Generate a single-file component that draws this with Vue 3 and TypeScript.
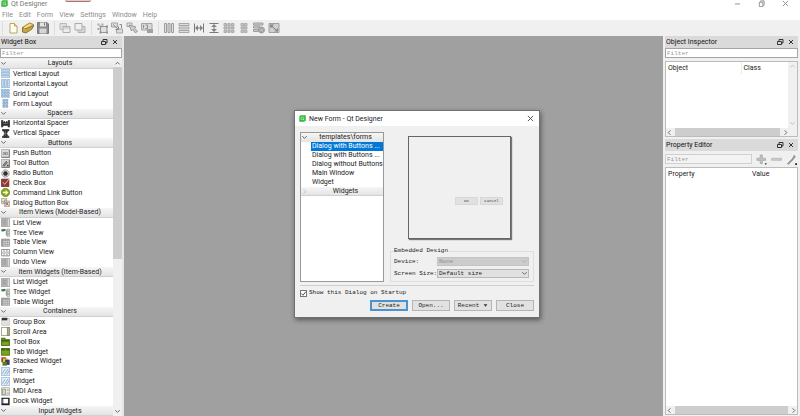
<script setup lang="ts">
import { ref } from 'vue'

type Shape = [d: string, fill: string, stroke?: string]
interface Row { label: string; icon?: string }

const menus = ['File', 'Edit', 'Form', 'View', 'Settings', 'Window', 'Help']

const toolGroups: string[][] = [
  ['new', 'open', 'save'],
  ['back', 'front'],
  ['editWidgets', 'editSignals', 'editBuddies', 'editTabs'],
  ['layH', 'layV', 'splitH', 'splitV', 'layGrid', 'layForm', 'breakLay', 'adjust'],
]

const rows: Row[] = [
  { label: 'Layouts' },
  { label: 'Vertical Layout', icon: 'vbox' },
  { label: 'Horizontal Layout', icon: 'hbox' },
  { label: 'Grid Layout', icon: 'grid' },
  { label: 'Form Layout', icon: 'form' },
  { label: 'Spacers' },
  { label: 'Horizontal Spacer', icon: 'hspace' },
  { label: 'Vertical Spacer', icon: 'vspace' },
  { label: 'Buttons' },
  { label: 'Push Button', icon: 'push' },
  { label: 'Tool Button', icon: 'tool' },
  { label: 'Radio Button', icon: 'radio' },
  { label: 'Check Box', icon: 'check' },
  { label: 'Command Link Button', icon: 'command' },
  { label: 'Dialog Button Box', icon: 'buttonBox' },
  { label: 'Item Views (Model-Based)' },
  { label: 'List View', icon: 'list' },
  { label: 'Tree View', icon: 'tree' },
  { label: 'Table View', icon: 'table' },
  { label: 'Column View', icon: 'column' },
  { label: 'Undo View', icon: 'list' },
  { label: 'Item Widgets (Item-Based)' },
  { label: 'List Widget', icon: 'list' },
  { label: 'Tree Widget', icon: 'tree' },
  { label: 'Table Widget', icon: 'table' },
  { label: 'Containers' },
  { label: 'Group Box', icon: 'group' },
  { label: 'Scroll Area', icon: 'scroll' },
  { label: 'Tool Box', icon: 'toolbox' },
  { label: 'Tab Widget', icon: 'tab' },
  { label: 'Stacked Widget', icon: 'stacked' },
  { label: 'Frame', icon: 'frame' },
  { label: 'Widget', icon: 'frame' },
  { label: 'MDI Area', icon: 'mdi' },
  { label: 'Dock Widget', icon: 'dock' },
  { label: 'Input Widgets' },
]

// Every icon is drawn on a 24 x 24 grid.
const icons: Record<string, Shape[]> = {
  logo: [['M5 1H23V18L18 23H1V6Z', '#2fb53c'], ['M7 7H16V16H7Z', 'none', '#c9f5cc'], ['M13 13L18 18', 'none', '#c9f5cc']],
  new: [['M6 3H15L20 8V22H6Z', '#fffdf0', '#b9a66a'], ['M15 3V8H20', '#f3dc8c', '#c2a448']],
  open: [['M1 11L15 2L23 5V9L9 18Z', '#e4c867', '#a08738'], ['M1 11L9 13L23 7L20 14L8 22L1 20Z', '#c8a640', '#907432'], ['M4 12L17 5', 'none', '#fff1b0']],
  save: [['M1 1H20L23 4V23H1Z', '#8a8a8a', '#777'], ['M6 1H18V9H6Z', '#e4e4e4'], ['M14 2H16V7H14Z', '#777'], ['M5 13H19V23H5Z', '#d5d5d5']],
  back: [['M2 3H15V15H2Z', '#dedede', '#b2b2b2'], ['M8 9H22V21H8Z', '#ececec', '#a4a4a4'], ['M8 12H22', 'none', '#b4b4b4']],
  front: [['M8 9H22V21H8Z', '#d2d2d2', '#a8a8a8'], ['M2 3H16V16H2Z', '#f0f0f0', '#a0a0a0']],
  editWidgets: [['M3 3H7V7H3Z M11 3H15V7H11Z M3 12H7V16H3Z', '#999'], ['M9 9H22V21H9Z', '#dedede', '#888'], ['M7 7H11V11H7Z M20 7H24V11H20Z M7 19H11V23H7Z M20 19H24V23H20Z', '#808080']],
  editSignals: [['M1 2H13V10H1Z M11 14H23V22H11Z', '#dcdcdc', '#969696'], ['M4 5L15 15M15 9V15H9M17 5H21V12', 'none', '#777']],
  editBuddies: [['M2 2H12V9H2Z', '#e0e0e0', '#999'], ['M6 6L11 18L14 15L19 22L23 18L17 13L20 10Z', '#c8c8c8', '#8a8a8a']],
  editTabs: [['M1 3H22V16H1Z', '#d4d4d4', '#999'], ['M5 6V13M9 6H13V13H9', 'none', '#808080'], ['M12 14H24V22H12Z', '#949494']],
  layH: [['M3 3H7V21H3Z M10 3H14V21H10Z M17 3H21V21H17Z', '#dcdcdc', '#919191']],
  layV: [['M2 3H22V7H2Z M2 10H22V14H2Z M2 17H22V21H2Z', '#dcdcdc', '#9c9c9c']],
  splitH: [['M3 3V21M21 3V21M6 12H18', 'none', '#666'], ['M4 12L10 6V18Z M20 12L14 6V18Z', '#707070']],
  splitV: [['M3 3H21M3 21H21M12 6V18', 'none', '#666'], ['M12 4L6 10H18Z M12 20L6 14H18Z', '#707070']],
  layGrid: [['M2 3H22V21H2Z', '#d0d0d0'], ['M2 3H7V8H2Z M10 3H14V8H10Z M17 3H22V8H17Z M2 10H7V14H2Z M10 10H14V14H10Z M17 10H22V14H17Z M2 17H7V21H2Z M10 17H14V21H10Z M17 17H22V21H17Z', '#b8b8b8', '#a2a2a2']],
  layForm: [['M6 3H18V21H6Z', '#d0d0d0'], ['M6 3H11V8H6Z M13 3H18V8H13Z M6 10H11V14H6Z M13 10H18V14H13Z M6 17H11V21H6Z M13 17H18V21H13Z', '#c0c0c0', '#a4a4a4']],
  breakLay: [['M1 2H20V6H1Z M1 8H13V12H1Z M1 15H11V19H1Z', '#c4c4c4', '#929292'], ['M17 9A7 7 0 1 1 16.9 9Z', '#929292'], ['M14 13L20 19M20 13L14 19', 'none', '#ccc']],
  adjust: [['M2 3H22V21H2Z', '#cbcbcb', '#929292'], ['M6 7L18 18', 'none', '#606060'], ['M4 5H12L5 13Z M20 19H13L20 12Z', '#707070']],
  vbox: [['M1 1H23V6H1Z M1 9H23V14H1Z M1 17H23V22H1Z', '#cfe3f5', '#7fa8cc']],
  hbox: [['M1 1H6V23H1Z M9 1H14V23H9Z M17 1H22V23H17Z', '#cfe3f5', '#7fa8cc']],
  grid: [['M1 1H22V22H1Z', '#cfe3f5'], ['M1 1H6V6H1Z M9 1H14V6H9Z M17 1H22V6H17Z M1 9H6V14H1Z M9 9H14V14H9Z M17 9H22V14H17Z M1 17H6V22H1Z M9 17H14V22H9Z M17 17H22V22H17Z', '#bdd8ef', '#7fa8cc']],
  form: [['M5 1H18V22H5Z', '#cfdfef'], ['M5 1H10V6H5Z M13 1H18V6H13Z M5 9H10V14H5Z M13 9H18V14H13Z M5 17H10V22H5Z M13 17H18V22H13Z', '#bdd3e8', '#7a9fc0']],
  hspace: [['M1 4H5V9H8V6L12 9L16 6V9H19V4H23V21H19V17H5V21H1Z', '#303030', '#303030'], ['M6 12H18', 'none', '#777']],
  vspace: [['M4 1H21V5H17V8L15 12L17 16V19H21V23H4V19H8V16L10 12L8 8V5H4Z', '#303030', '#303030'], ['M12 6V18', 'none', '#777']],
  push: [['M1 1H23V23H1Z', '#dedede', '#9b9b9b'], ['M2 22H22V3', 'none', '#5f5f5f'], ['M6 9H17V15H6Z', '#fff', '#777'], ['M9 12H14', 'none', '#444']],
  tool: [['M1 1H23V23H1Z', '#d4d4d4', '#999'], ['M2 22H22V3', 'none', '#555'], ['M5 17L14 6L17 10L9 19Z', '#8d8d8d', '#555'], ['M17 15H20V19H15Z', '#333']],
  radio: [['M12 2A10 10 0 1 1 11.9 2Z', '#d4d4d4', '#8d8d8d'], ['M12 6A6 6 0 1 1 11.9 6Z', '#303030']],
  check: [['M1 3H21V23H1Z', '#913832', '#6b2925'], ['M5 11L10 17L22 2', 'none', '#ffe4df'], ['M17 1H23V6Z', '#d4aaa6']],
  command: [['M12 1A11 11 0 1 1 11.9 1Z', '#87a51c', '#5f7812'], ['M5 10H12V5L20 12L12 19V14H5Z', '#f6ffd0']],
  buttonBox: [['M1 1H15V15H1Z M9 8H23V23H9Z', '#e2ddd4', '#9f9890'], ['M3 8L7 12L12 4', 'none', '#699b42'], ['M12 11L20 20M20 11L12 20', 'none', '#bb3029']],
  list: [['M1 1H23V23H1Z', '#a5a5a5', '#999'], ['M2 2H17V22H2Z', '#b4b4b4'], ['M4 6H14M4 11H14M4 16H14', 'none', '#949494'], ['M18 2H22V22H18Z', '#d9d9d9']],
  tree: [['M1 3H8V9H1Z', '#367942'], ['M9 5H14M14 5V19M14 12H18M14 19H18', 'none', '#777'], ['M16 3H23V8H16Z M16 10H23V15H16Z M16 17H23V22H16Z', '#e8f0e8', '#87948a'], ['M8 1L12 5L8 9Z', '#315e38']],
  table: [['M1 3H23V22H1Z', '#d8d8d8', '#8b8b8b'], ['M1 3H23V7H1Z M1 3H6V22H1Z', '#999'], ['M1 12H23M1 17H23M11 3V22M17 3V22', 'none', '#a2a2a2']],
  column: [['M1 4H23V21H1Z', '#fff', '#757575'], ['M8 4V21M16 4V21', 'none', '#777'], ['M4 9V16M12 9V16M20 9V16', 'none', '#bbb']],
  group: [['M2 4H22V22H2Z', '#f0f0f0', '#b3b3b3'], ['M2 2H17V9H2Z', '#353535'], ['M4 12H20V20H4Z', '#dedede']],
  scroll: [['M1 1H22V23H1Z', '#fffffa', '#777b67'], ['M17 1H22V23H17Z', '#b6bd91', '#74794f']],
  toolbox: [['M1 3H11V7H23V23H1Z', '#648d16', '#3f5b0a'], ['M2 10H22', 'none', '#263e07'], ['M4 14H20V21H4Z', '#7ca724']],
  tab: [['M1 4H23V22H1Z', '#76a51c', '#3f5b0a'], ['M1 4H11V9H1Z M13 4H23V9H13Z', '#3f650f']],
  stacked: [['M1 1H14V14H1Z', '#a22b21'], ['M5 4H18V18H5Z', '#e6cc25'], ['M11 7H23V21H11Z', '#303d76'], ['M4 13H16V23H4Z', '#527d22']],
  frame: [['M1 1H23V23H1Z', '#e0edf8', '#8eafcf'], ['M3 18L11 6M9 20L19 5M15 20L22 9', 'none', '#7f9cb9']],
  mdi: [['M1 2H23V22H1Z', '#f3f3ee', '#999'], ['M4 6H12V20H4Z', '#d2d9c8', '#82917b'], ['M15 5H21V11H15Z M15 14H21V20H15Z', '#bfc7ae']],
  dock: [['M1 2H23V22H1Z', '#202020'], ['M6 5H19V17H6Z', '#fff'], ['M1 5H4V17H1Z', '#89a5bd']],
  plus: [['M9 2H14V9H21V14H14V21H9V14H2V9H9Z', '#c0c0c0', '#929292'], ['M19 20H24L21 24Z', '#333']],
  minus: [['M1 9H23V14H1Z', '#c8c8c8', '#aaa']],
  wrench: [['M3 21L14 10L18 3L20 5L16 12L5 23Z', '#969696', '#777'], ['M16 3L21 8', 'none', '#888'], ['M20 20H24V24H20Z', '#222']],
}

const templates = ['Dialog with Buttons ...', 'Dialog with Buttons ...', 'Dialog without Buttons', 'Main Window', 'Widget']
const selected = ref(0)
const showOnStartup = ref(true)
</script>

<template>
  <div class="app">
    <header class="titlebar">
      <svg class="logo" viewBox="0 0 24 24"><path v-for="(s, i) in icons.logo" :key="i" :d="s[0]" :fill="s[1]" :stroke="s[2] ?? 'none'" stroke-width="2" /></svg>
      <span>Qt Designer</span>
      <i class="marker"></i>
      <div class="window-buttons">
        <button aria-label="Minimize"><svg viewBox="0 0 8 8"><path d="M1 4.500H7" /></svg></button>
        <button aria-label="Restore"><svg viewBox="0 0 8 8"><path d="M1.500 2.500H5.500V7.500H1.500ZM3 2V1H7V6H6" /></svg></button>
        <button aria-label="Close"><svg viewBox="0 0 8 8"><path d="M1 1L7 7M7 1L1 7" /></svg></button>
      </div>
    </header>

    <nav class="menubar"><button v-for="m in menus" :key="m">{{ m }}</button></nav>

    <div class="toolbar">
      <div v-for="(g, gi) in toolGroups" :key="gi" class="tool-group">
        <button v-for="t in g" :key="t" :aria-label="t">
          <svg viewBox="0 0 24 24"><path v-for="(s, i) in icons[t]" :key="i" :d="s[0]" :fill="s[1]" :stroke="s[2] ?? 'none'" stroke-width="2" /></svg>
        </button>
      </div>
    </div>

    <main class="body">
      <aside class="widget-box">
        <div class="dock-title">
          <span>Widget Box</span>
          <button aria-label="Float"><svg viewBox="0 0 8 8"><path d="M1.500 3.500H5.500V6.500H1.500ZM3 3V1.500H7V5H6" /></svg></button>
          <button aria-label="Close"><svg viewBox="0 0 8 8"><path d="M2 2L6 6M6 2L2 6" /></svg></button>
        </div>
        <input class="filter" type="text" placeholder="Filter" aria-label="Filter widgets">
        <div class="widget-tree">
          <div class="tree-rows">
            <div v-for="(r, ri) in rows" :key="ri" class="row" :class="{ category: !r.icon }">
              <svg v-if="!r.icon" class="chevron" viewBox="0 0 8 8"><path d="M1.500 2.500L4 5L6.500 2.500" /></svg>
              <svg v-else class="row-icon" viewBox="0 0 24 24"><path v-for="(s, i) in icons[r.icon]" :key="i" :d="s[0]" :fill="s[1]" :stroke="s[2] ?? 'none'" stroke-width="2" /></svg>
              <span>{{ r.label }}</span>
            </div>
          </div>
          <div class="vscroll">
            <svg class="chevron" viewBox="0 0 8 8"><path d="M1.500 5L4 2.500L6.500 5" /></svg>
            <i class="vthumb"></i>
            <svg class="chevron" viewBox="0 0 8 8"><path d="M1.500 2.500L4 5L6.500 2.500" /></svg>
          </div>
        </div>
      </aside>

      <section class="workspace"></section>

      <aside class="right-docks">
        <section class="inspector">
          <div class="dock-title">
            <span>Object Inspector</span>
            <button aria-label="Float"><svg viewBox="0 0 8 8"><path d="M1.500 3.500H5.500V6.500H1.500ZM3 3V1.500H7V5H6" /></svg></button>
            <button aria-label="Close"><svg viewBox="0 0 8 8"><path d="M2 2L6 6M6 2L2 6" /></svg></button>
          </div>
          <input class="filter" type="text" placeholder="Filter" aria-label="Filter objects">
          <div class="data-view">
            <div class="data-area">
              <table><thead><tr><th>Object</th><th class="class-col">Class</th></tr></thead></table>
              <div class="vscroll plain">
                <svg class="chevron faint" viewBox="0 0 8 8"><path d="M1.500 5L4 2.500L6.500 5" /></svg>
                <svg class="chevron faint" viewBox="0 0 8 8"><path d="M1.500 2.500L4 5L6.500 2.500" /></svg>
              </div>
            </div>
            <div class="hscroll short">
              <svg class="chevron" viewBox="0 0 8 8"><path d="M5 1.500L2.500 4L5 6.500" /></svg>
              <i></i>
              <svg class="chevron" viewBox="0 0 8 8"><path d="M3 1.500L5.500 4L3 6.500" /></svg>
            </div>
          </div>
        </section>

        <section class="properties">
          <div class="dock-title">
            <span>Property Editor</span>
            <button aria-label="Float"><svg viewBox="0 0 8 8"><path d="M1.500 3.500H5.500V6.500H1.500ZM3 3V1.500H7V5H6" /></svg></button>
            <button aria-label="Close"><svg viewBox="0 0 8 8"><path d="M2 2L6 6M6 2L2 6" /></svg></button>
          </div>
          <div class="property-tools">
            <input class="filter" type="text" placeholder="Filter" aria-label="Filter properties">
            <button v-for="t in ['plus', 'minus', 'wrench']" :key="t" :aria-label="t">
              <svg viewBox="0 0 24 24"><path v-for="(s, i) in icons[t]" :key="i" :d="s[0]" :fill="s[1]" :stroke="s[2] ?? 'none'" stroke-width="1" /></svg>
            </button>
          </div>
          <div class="data-view">
            <div class="data-area">
              <table><thead><tr><th>Property</th><th class="value-col">Value</th></tr></thead></table>
            </div>
            <div class="hscroll">
              <svg class="chevron" viewBox="0 0 8 8"><path d="M5 1.500L2.500 4L5 6.500" /></svg>
              <i></i>
              <svg class="chevron" viewBox="0 0 8 8"><path d="M3 1.500L5.500 4L3 6.500" /></svg>
            </div>
          </div>
        </section>
      </aside>
    </main>

    <section class="dialog" role="dialog" aria-labelledby="dialog-title">
      <div class="dialog-title">
        <svg class="logo" viewBox="0 0 24 24"><path v-for="(s, i) in icons.logo" :key="i" :d="s[0]" :fill="s[1]" :stroke="s[2] ?? 'none'" stroke-width="2" /></svg>
        <span id="dialog-title">New Form - Qt Designer</span>
        <button aria-label="Close dialog"><svg viewBox="0 0 8 8"><path d="M1 1L7 7M7 1L1 7" /></svg></button>
      </div>
      <div class="dialog-body">
        <div class="dialog-top">
          <div class="template-list">
            <div class="row category">
              <svg class="chevron" viewBox="0 0 8 8"><path d="M1.500 2.500L4 5L6.500 2.500" /></svg>
              <span>templates\forms</span>
            </div>
            <button v-for="(t, i) in templates" :key="i" class="template" :class="{ selected: selected === i }" @click="selected = i">{{ t }}</button>
            <div class="row category">
              <svg class="chevron faint" viewBox="0 0 8 8"><path d="M3 1.500L5.500 4L3 6.500" /></svg>
              <span>Widgets</span>
            </div>
          </div>
          <div class="details">
            <div class="preview"><span>OK</span><span>Cancel</span></div>
            <fieldset>
              <legend>Embedded Design</legend>
              <label for="device">Device:</label>
              <div class="select-wrap off">
                <select id="device" disabled><option>None</option></select>
                <svg class="chevron" viewBox="0 0 8 8"><path d="M1.500 2.500L4 5L6.500 2.500" /></svg>
              </div>
              <label for="screen-size">Screen Size:</label>
              <div class="select-wrap">
                <select id="screen-size"><option>Default size</option></select>
                <svg class="chevron" viewBox="0 0 8 8"><path d="M1.500 2.500L4 5L6.500 2.500" /></svg>
              </div>
            </fieldset>
          </div>
        </div>
        <hr>
        <label class="startup">
          <span class="tick-box">
            <input v-model="showOnStartup" type="checkbox">
            <svg v-if="showOnStartup" viewBox="0 0 8 8"><path d="M1.500 4L3.500 6L6.500 2" /></svg>
          </span>
          <span>Show this Dialog on Startup</span>
        </label>
        <div class="actions">
          <button class="primary">Create</button>
          <button>Open...</button>
          <button>Recent <svg class="arrow" viewBox="0 0 8 8"><path d="M1 2H7L4 6Z" /></svg></button>
          <button>Close</button>
        </div>
      </div>
    </section>
  </div>
</template>

<style>
body { overflow: hidden; }
</style>

<style scoped>
.app, .app * { box-sizing: border-box; }
.app { position: relative; height: 100vh; display: flex; flex-direction: column; background: #fff; color: #222; font: 7px/10px Roboto, "Noto Sans", sans-serif; white-space: nowrap; }
button, input, select { font: inherit; color: inherit; margin: 0; padding: 0; border: 0; background: none; border-radius: 0; appearance: none; min-width: 0; }
svg { display: block; flex: none; }
.logo { width: 7px; height: 7px; }

.titlebar { flex: none; height: 9px; display: flex; align-items: flex-start; gap: 3px; padding-left: 1px; color: #777; line-height: 8px; }
.marker { width: 26px; height: 2px; margin-left: 15px; background: #e6c8c6; border-bottom: 1px solid #a87672; border-radius: 0 0 3px 3px; }
.window-buttons { margin-left: auto; padding-right: 10px; display: flex; gap: 16px; }
.window-buttons svg, .dialog-title button svg { width: 7px; height: 7px; fill: none; stroke: #888; stroke-width: 1; }
.window-buttons button { display: block; width: 8px; height: 6px; }

.menubar { flex: none; height: 11px; display: flex; align-items: center; gap: 6px; padding-left: 2px; color: #8c8c8c; }
.toolbar { flex: none; height: 16px; display: flex; align-items: center; background: #f0f0f0; padding-left: 2px; }
.tool-group { height: 14px; display: flex; align-items: center; gap: 3px; padding: 0 4px; border-left: 1px solid #dedede; }
.tool-group + .tool-group { margin-left: 1px; }
.tool-group + .tool-group svg { opacity: .85; }
.tool-group button, .tool-group svg { width: 12px; height: 12px; }

.body { flex: 1; min-height: 0; display: flex; background: #f0f0f0; }
.widget-box { flex: none; width: 124px; display: flex; flex-direction: column; border-right: 2px solid #e6e6e6; }
.dock-title { flex: none; height: 12px; display: flex; align-items: center; gap: 3px; padding: 0 3px 0 1px; background: #dadada; color: #111; }
.dock-title span { flex: 1; }
.dock-title button, .dock-title svg { width: 8px; height: 8px; }
.dock-title svg { fill: none; stroke: #333; stroke-width: 1; }
.filter { flex: none; width: 100%; height: 10px; border: 1px solid #a5a5a5; background: #fff; font: 6px/8px "Liberation Mono", monospace; padding-left: 1px; }
.filter::placeholder { color: #999; opacity: 1; }
.widget-tree { flex: 1; min-height: 0; display: flex; margin-top: 1px; background: #fff; }
.tree-rows { flex: 1; display: grid; grid-auto-rows: minmax(0, 1fr); }
.row { display: flex; align-items: center; gap: 3px; padding-left: 1px; }
.row-icon { width: 9px; height: 9px; }
.category { background: linear-gradient(#f6f6f6, #e4e4e4); border-bottom: 1px solid #d0d0d0; padding-left: 0; gap: 0; }
.category span { flex: 1; text-align: center; }
.chevron { width: 7px; height: 7px; fill: none; stroke: #555; stroke-width: 1; }
.chevron.faint { stroke: #bbb; }
.vscroll { flex: none; width: 9px; background: #f0f0f0; display: flex; flex-direction: column; align-items: center; padding: 1px 0; }
.vthumb { width: 100%; height: 192px; background: #cdcdcd; margin-bottom: auto; }
.plain { justify-content: space-between; }

.workspace { flex: 1; background: #a0a0a0; }
.right-docks { flex: none; width: 137px; padding: 0 2px 1px 2px; display: flex; flex-direction: column; gap: 2px; }
.inspector { flex: none; height: 101px; display: flex; flex-direction: column; }
.inspector .data-view { margin-top: 3px; }
.properties { flex: 1; min-height: 0; display: flex; flex-direction: column; }
.data-view { flex: 1; min-height: 0; display: flex; flex-direction: column; border: 1px solid #bcbcbc; background: #fff; }
.data-area { flex: 1; min-height: 0; display: flex; align-items: stretch; }
table { flex: 1; align-self: flex-start; border-collapse: collapse; table-layout: fixed; }
th { font-weight: 400; text-align: left; height: 12px; padding: 0 0 0 2px; }
.class-col { width: 47px; }
.value-col { width: 47px; }
.inspector th:first-child { border-right: 1px solid #ededed; }
.hscroll { flex: none; height: 8px; display: flex; align-items: center; gap: 2px; background: #f0f0f0; }
.hscroll i { flex: 1; height: 8px; background: #cdcdcd; }
.hscroll.short { padding-right: 8px; }
.property-tools { flex: none; height: 16px; display: flex; align-items: center; gap: 4px; padding-right: 1px; }
.property-tools .filter { flex: 1; background: #f3f3f3; border-color: #d0d0d0; }
.property-tools button, .property-tools svg { flex: none; width: 11px; height: 11px; }

.dialog { position: absolute; left: 294px; top: 110px; width: 246px; background: #f0f0f0; border: 1px solid #707070; box-shadow: 1px 2px 5px rgba(0, 0, 0, .45); }
.dialog-title { height: 15px; display: flex; align-items: center; gap: 3px; padding: 0 5px 0 4px; background: #fff; }
.dialog-title span { flex: 1; }
.dialog-title button svg { stroke: #444; }
.dialog-body { padding: 6px 5px; font: 6px/8px "Liberation Mono", monospace; }
.dialog-top { display: flex; gap: 6px; }
.template-list { flex: none; width: 84px; height: 150px; border: 1px solid #999; background: #fff; display: flex; flex-direction: column; font: 7px/9px Roboto, "Noto Sans", sans-serif; }
.template-list .row { flex: none; height: 9px; }
.template-list .row:first-child { border-bottom-width: 0; }
.template { flex: none; height: 9px; line-height: 9px; margin-left: 10px; padding-left: 1px; text-align: left; }
.template.selected { background: #0078d7; color: #fff; }
.details { flex: 1; min-width: 0; display: flex; flex-direction: column; justify-content: space-between; }
.preview { width: 103px; height: 103px; margin: 4px auto 0 18px; border: 1px solid #666; box-shadow: 1px 1px 1px #777; display: flex; align-items: flex-end; justify-content: flex-end; gap: 2px; padding: 0 7px 33px 0; font-size: 4px; color: #444; text-align: center; }
.preview span { width: 23px; background: #e1e1e1; border: 1px solid #d8d8d8; height: 8px; line-height: 6px; }
fieldset { margin: 0; padding: 0 4px 3px 3px; border: 1px solid #dedede; display: grid; grid-template-columns: 43px 1fr; gap: 3px 0; align-items: center; min-width: 0; }
legend { padding: 0; margin-bottom: 2px; }
.select-wrap { display: flex; align-items: center; background: #e1e1e1; border: 1px solid #b8b8b8; height: 9px; min-width: 0; }
.select-wrap select { flex: 1; height: 7px; line-height: 7px; padding-left: 1px; opacity: 1; }
.select-wrap.off { background: #cccccc; border-color: #c4c4c4; color: #8e8e8e; }
.off .chevron { stroke: #aaa; }
hr { margin: 3px 0; border: 0; border-top: 1px solid #cfcfcf; }
.startup { display: flex; align-items: center; gap: 2px; height: 8px; }
.tick-box { display: grid; width: 7px; height: 7px; }
.tick-box input, .tick-box svg { grid-area: 1 / 1; width: 7px; height: 7px; }
.tick-box input { border: 1px solid #777; background: #fff; }
.tick-box svg { fill: none; stroke: #333; stroke-width: 1; pointer-events: none; }
.actions { display: flex; justify-content: flex-end; gap: 4px; margin-top: 3px; }
.actions button { width: 38px; height: 11px; background: #e1e1e1; border: 1px solid #b5b5b5; display: flex; align-items: center; justify-content: center; gap: 4px; }
.actions .primary { border: 2px solid #4a93d1; }
.arrow { width: 5px; height: 5px; fill: #333; }
</style>
